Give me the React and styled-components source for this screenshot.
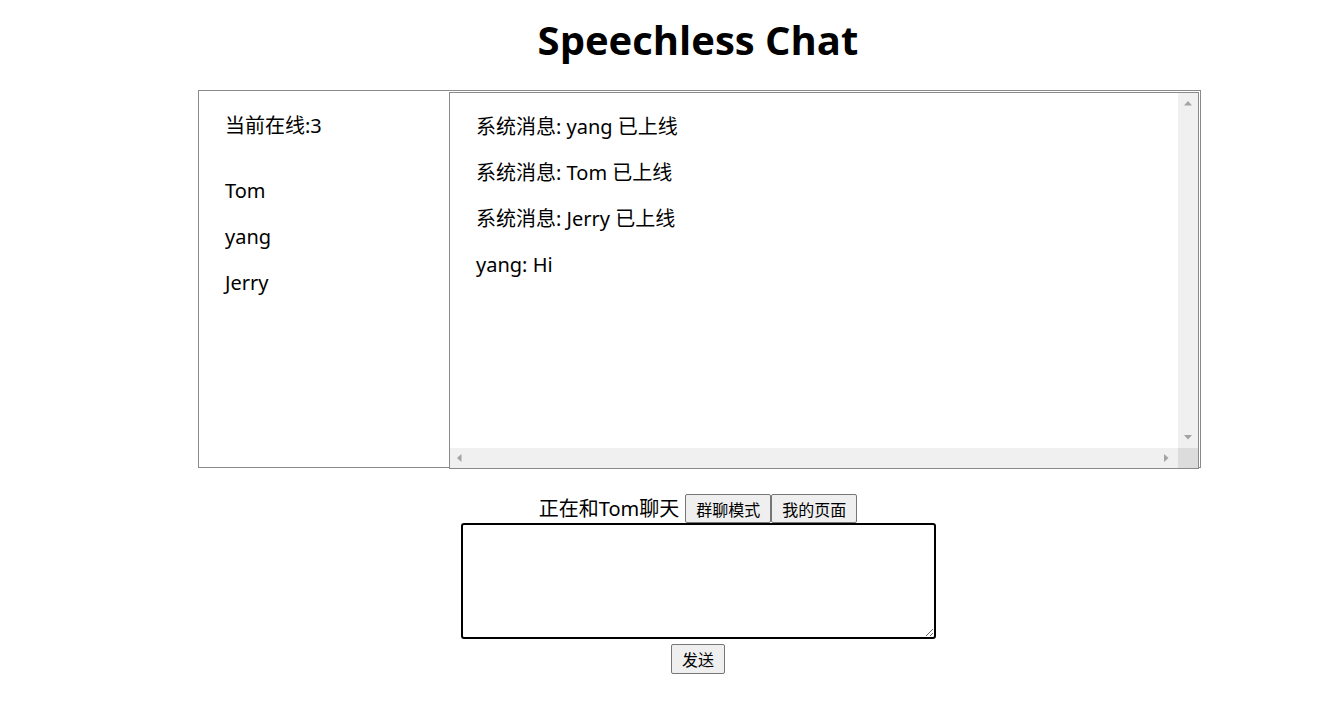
import React from "react";
import styled, { createGlobalStyle } from "styled-components";

const Global = createGlobalStyle`
  body {
    margin: 0;
    background: #fff;
    font-family: "Noto Sans", "Noto Sans CJK SC", sans-serif;
    color: #000;
  }
`;

const users = ["Tom", "yang", "Jerry"];
const messages = [
  "系统消息: yang 已上线",
  "系统消息: Tom 已上线",
  "系统消息: Jerry 已上线",
  "yang: Hi",
];

// little grey scrollbar arrows
const Arrow = ({ dir }) => {
  const pts = {
    up: "0,4.5 4,0 8,4.5",
    down: "0,0 4,4.5 8,0",
    left: "4.5,0 0,4 4.5,8",
    right: "0,0 4.5,4 0,8",
  }[dir];
  const vertical = dir === "up" || dir === "down";
  return (
    <svg width={vertical ? 8 : 5} height={vertical ? 5 : 8}>
      <polygon points={pts} fill="#a3a3a3" />
    </svg>
  );
};

const App = () => {
  return (
    <>
      <Global />
      <Page>
        <Title>Speechless Chat</Title>
        <ChatBox>
          <Sidebar>
            <OnlineCount>当前在线:3</OnlineCount>
            {users.map((u) => (
              <UserItem key={u}>{u}</UserItem>
            ))}
          </Sidebar>
          <MessagePanel>
            <MessageList>
              {messages.map((m, i) => (
                <Message key={i}>{m}</Message>
              ))}
            </MessageList>
            <VScroll>
              <Arrow dir="up" />
              <Arrow dir="down" />
            </VScroll>
            <HScroll>
              <Arrow dir="left" />
              <Arrow dir="right" />
            </HScroll>
            <Corner />
          </MessagePanel>
        </ChatBox>
        <Composer>
          <ModeRow>
            <Label>正在和Tom聊天</Label>
            <Button>群聊模式</Button>
            <Button>我的页面</Button>
          </ModeRow>
          <Input autoFocus />
          <SendButton>发送</SendButton>
        </Composer>
      </Page>
    </>
  );
};

export default App;

const Page = styled.div`
  width: 1000px;
  margin-left: 198px;
  display: flex;
  flex-direction: column;
  align-items: center;
`;

const Title = styled.h1`
  margin: 12px 0 22px;
  font-family: "Open Sans", "Noto Sans", sans-serif;
  font-size: 40px;
  font-weight: 700;
  line-height: 56px;
`;

const ChatBox = styled.div`
  align-self: flex-start;
  width: 1003px;
  height: 378px;
  box-sizing: border-box;
  border: 1px solid #8a8a8a;
  display: flex;
  align-items: flex-start;
`;

const Sidebar = styled.div`
  width: 250px;
  padding: 21px 0 0 26px;
  box-sizing: border-box;
  font-size: 20px;
`;

const OnlineCount = styled.div`
  line-height: 28px;
  margin-bottom: 37px;
`;

const UserItem = styled.div`
  line-height: 28px;
  margin-bottom: 18px;
`;

const MessagePanel = styled.div`
  flex: none;
  margin-top: 1px;
  width: 750px;
  height: 377px;
  box-sizing: border-box;
  border: 1px solid #8a8a8a;
  display: grid;
  grid-template-columns: 1fr 20px;
  grid-template-rows: 1fr 20px;
`;

const MessageList = styled.div`
  overflow: hidden;
  padding: 20px 0 0 26px;
  font-size: 20px;
`;

const Message = styled.div`
  line-height: 28px;
  margin-bottom: 18px;
`;

const VScroll = styled.div`
  background: #f0f0f0;
  display: flex;
  flex-direction: column;
  justify-content: space-between;
  align-items: center;
  padding: 8px 0 8px;
`;

const HScroll = styled.div`
  background: #f0f0f0;
  display: flex;
  justify-content: space-between;
  align-items: center;
  padding: 0 9px 0 7px;
`;

const Corner = styled.div`
  background: #dcdcdc;
`;

const Composer = styled.div`
  margin-top: 26px;
  display: flex;
  flex-direction: column;
  align-items: center;
`;

const ModeRow = styled.div`
  display: flex;
  align-items: flex-end;
  height: 29px;
`;

const Label = styled.span`
  font-size: 20px;
  line-height: 28px;
  margin-right: 6px;
`;

const Button = styled.button`
  font-family: "Noto Sans CJK SC", sans-serif;
  font-size: 16px;
  height: 29px;
  padding: 0 10px;
  margin: 0;
  border: 1px solid #767676;
  border-radius: 2px;
  background: #efefef;
  color: #000;
`;

const Input = styled.textarea`
  width: 475px;
  height: 116px;
  box-sizing: border-box;
  border: 2px solid #000;
  border-radius: 3px;
  outline: none;
  font-family: "Noto Sans", sans-serif;
  font-size: 16px;
  display: block;
  margin: 0;
`;

const SendButton = styled(Button)`
  margin-top: 5px;
  height: 30px;
`;
